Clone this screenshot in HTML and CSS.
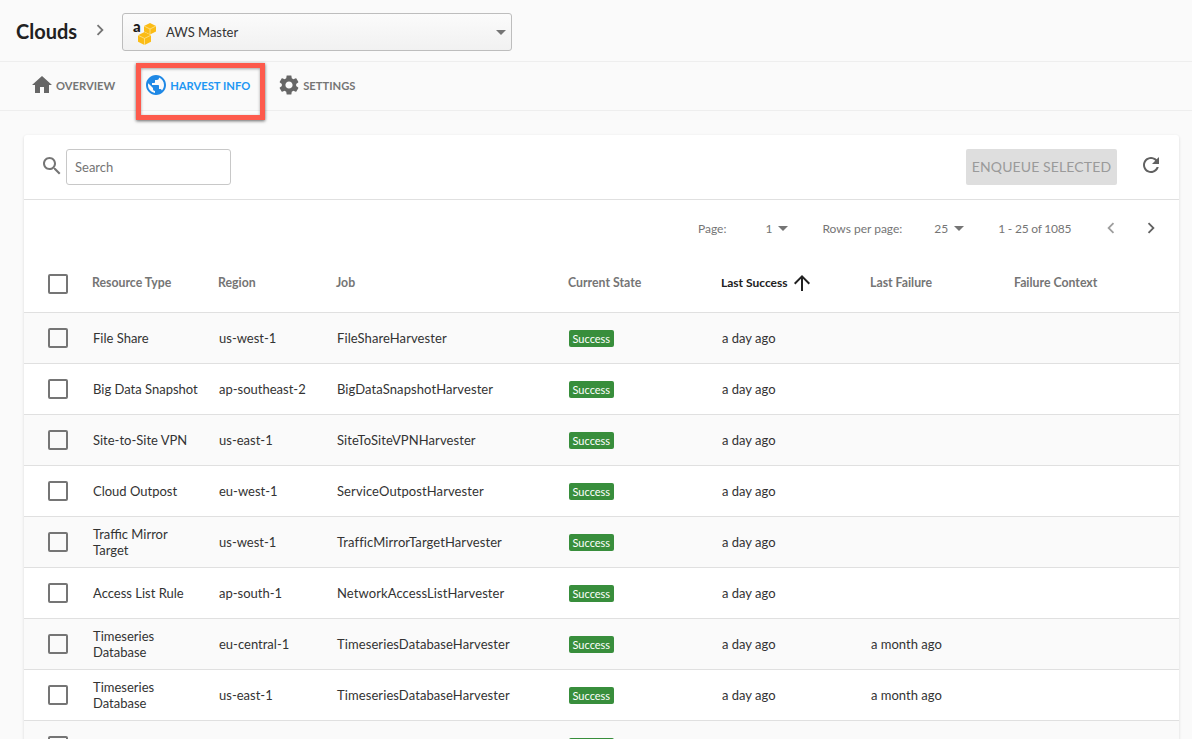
FILE: index.html
```html
<!DOCTYPE html>
<html lang="en">
<head>
<meta charset="utf-8">
<title>Clouds</title>
<link rel="stylesheet" href="styles.css">
</head>
<body>
<header class="topbar">
  <h1 class="title">Clouds</h1>
  <svg class="crumb" viewBox="0 0 24 24"><path d="M10 6L8.590 7.410 13.170 12l-4.580 4.590L10 18l6-6z"/></svg>
  <div class="select">
    <svg class="aws" viewBox="0 0 24 26">
      <path fill="#fbbc15" d="M18 4l6 3v5.500l-6 3-6-3V7z"/>
      <path fill="none" stroke="#fde9a8" stroke-width=".7" d="M12 7l6 3 6-3M18 10v5.500"/>
      <path fill="#fbbc15" d="M12.500 13l6.500 3.200v6.600L12.500 26 6 22.800v-6.600z"/>
      <path fill="none" stroke="#fde9a8" stroke-width=".7" d="M6 16.200l6.500 3.200 6.500-3.200M12.500 19.400V26"/>
    </svg>
    <span class="aws-a">a</span>
    <span class="select-label">AWS Master</span>
    <span class="caret select-caret"></span>
  </div>
</header>
<nav class="tabs">
  <a class="tab"><svg class="tab-icon" viewBox="0 0 24 24"><path d="M10 20v-6h4v6h5v-8h3L12 3 2 12h3v8z"/></svg>OVERVIEW</a>
  <a class="tab tab-active"><svg class="tab-icon" viewBox="0 0 24 24"><path d="M12 2C6.480 2 2 6.480 2 12s4.480 10 10 10 10-4.480 10-10S17.520 2 12 2zm-1 17.930c-3.950-.490-7-3.850-7-7.930 0-.620.080-1.210.210-1.790L9 15v1c0 1.100.900 2 2 2v1.930zm6.900-2.540c-.260-.810-1-1.390-1.900-1.390h-1v-3c0-.550-.450-1-1-1H8v-2h2c.550 0 1-.450 1-1V7h2c1.100 0 2-.900 2-2v-.410c2.930 1.190 5 4.060 5 7.410 0 2.080-.800 3.970-2.100 5.390z"/></svg>HARVEST INFO</a>
  <a class="tab"><svg class="tab-icon" viewBox="0 0 24 24"><path d="M19.140 12.940c.040-.300.060-.610.060-.940 0-.320-.020-.640-.070-.940l2.030-1.580c.180-.140.230-.410.120-.610l-1.920-3.320c-.120-.220-.370-.290-.590-.220l-2.390.960c-.500-.380-1.030-.700-1.620-.940l-.360-2.540c-.040-.240-.240-.410-.480-.410h-3.840c-.240 0-.430.170-.470.410l-.360 2.540c-.590.240-1.130.570-1.620.940l-2.390-.960c-.220-.080-.470 0-.590.220L2.740 8.870c-.120.210-.080.470.120.610l2.030 1.580c-.050.300-.090.630-.090.940s.020.640.070.940l-2.030 1.580c-.180.140-.230.410-.120.610l1.920 3.320c.120.220.370.290.590.220l2.390-.960c.500.380 1.030.700 1.620.940l.360 2.540c.050.240.240.410.480.410h3.840c.240 0 .440-.170.470-.410l.360-2.540c.590-.240 1.130-.560 1.620-.940l2.390.960c.220.080.470 0 .590-.220l1.920-3.320c.120-.220.070-.470-.120-.610l-2.010-1.580zM12 15.600c-1.980 0-3.600-1.620-3.600-3.600s1.620-3.600 3.600-3.600 3.600 1.620 3.600 3.600-1.620 3.600-3.600 3.600z"/></svg>SETTINGS</a>
  <div class="highlight"></div>
</nav>
<main class="content">
  <section class="card">
    <div class="toolbar">
      <svg class="search-icon" viewBox="0 0 24 24"><path d="M15.500 14h-.790l-.280-.270C15.410 12.590 16 11.110 16 9.500 16 5.910 13.090 3 9.500 3S3 5.910 3 9.500 5.910 16 9.500 16c1.610 0 3.090-.590 4.230-1.570l.270.280v.790l5 4.990L20.490 19l-4.990-5zm-6 0C7.010 14 5 11.990 5 9.500S7.010 5 9.500 5 14 7.010 14 9.500 11.990 14 9.500 14z"/></svg>
      <input class="search" type="text" placeholder="Search">
      <button class="enqueue" type="button" disabled>ENQUEUE SELECTED</button>
      <svg class="refresh" viewBox="0 0 24 24"><path d="M17.650 6.350C16.200 4.900 14.210 4 12 4c-4.420 0-7.990 3.580-7.990 8s3.570 8 7.990 8c3.730 0 6.840-2.550 7.730-6h-2.080c-.820 2.330-3.040 4-5.650 4-3.310 0-6-2.690-6-6s2.690-6 6-6c1.660 0 3.140.690 4.220 1.780L13 11h7V4l-2.350 2.350z"/></svg>
    </div>
    <div class="pager">
      <span class="pager-label">Page:</span>
      <span class="pager-value page-value">1<span class="caret"></span></span>
      <span class="pager-label rows-label">Rows per page:</span>
      <span class="pager-value rows-value">25<span class="caret"></span></span>
      <span class="pager-range">1 - 25 of 1085</span>
      <svg class="pager-nav prev" viewBox="0 0 24 24"><path d="M15.410 7.410L14 6l-6 6 6 6 1.410-1.410L10.830 12z"/></svg>
      <svg class="pager-nav next" viewBox="0 0 24 24"><path d="M10 6L8.590 7.410 13.170 12l-4.580 4.590L10 18l6-6z"/></svg>
    </div>
    <table class="grid">
      <colgroup>
        <col class="c-check"><col class="c-type"><col class="c-region"><col class="c-job"><col class="c-state"><col class="c-success"><col class="c-failure"><col class="c-context">
      </colgroup>
      <thead>
        <tr>
          <th><span class="box"></span></th>
          <th><span class="th-text">Resource Type</span></th><th><span class="th-text">Region</span></th><th><span class="th-text">Job</span></th><th><span class="th-text">Current State</span></th>
          <th class="sorted"><span class="sort-wrap th-text">Last Success<svg class="sort-arrow" viewBox="0 0 24 24"><path d="M4 12l1.410 1.410L11 7.830V20h2V7.830l5.580 5.590L20 12l-8-8-8 8z"/></svg></span></th>
          <th><span class="th-text">Last Failure</span></th><th><span class="th-text">Failure Context</span></th>
        </tr>
      </thead>
      <tbody>
        <tr><td><span class="box"></span></td><td>File Share</td><td>us-west-1</td><td class="job">FileShareHarvester</td><td><span class="badge">Success</span></td><td>a day ago</td><td></td><td></td></tr>
        <tr><td><span class="box"></span></td><td>Big Data Snapshot</td><td>ap-southeast-2</td><td class="job">BigDataSnapshotHarvester</td><td><span class="badge">Success</span></td><td>a day ago</td><td></td><td></td></tr>
        <tr><td><span class="box"></span></td><td>Site-to-Site VPN</td><td>us-east-1</td><td class="job">SiteToSiteVPNHarvester</td><td><span class="badge">Success</span></td><td>a day ago</td><td></td><td></td></tr>
        <tr><td><span class="box"></span></td><td>Cloud Outpost</td><td>eu-west-1</td><td class="job">ServiceOutpostHarvester</td><td><span class="badge">Success</span></td><td>a day ago</td><td></td><td></td></tr>
        <tr><td><span class="box"></span></td><td>Traffic Mirror Target</td><td>us-west-1</td><td class="job">TrafficMirrorTargetHarvester</td><td><span class="badge">Success</span></td><td>a day ago</td><td></td><td></td></tr>
        <tr><td><span class="box"></span></td><td>Access List Rule</td><td>ap-south-1</td><td class="job">NetworkAccessListHarvester</td><td><span class="badge">Success</span></td><td>a day ago</td><td></td><td></td></tr>
        <tr><td><span class="box"></span></td><td>Timeseries Database</td><td>eu-central-1</td><td class="job">TimeseriesDatabaseHarvester</td><td><span class="badge">Success</span></td><td>a day ago</td><td>a month ago</td><td></td></tr>
        <tr><td><span class="box"></span></td><td>Timeseries Database</td><td>us-east-1</td><td class="job">TimeseriesDatabaseHarvester</td><td><span class="badge">Success</span></td><td>a day ago</td><td>a month ago</td><td></td></tr>
        <tr><td><span class="box"></span></td><td></td><td></td><td></td><td><span class="badge">Success</span></td><td></td><td></td><td></td></tr>
      </tbody>
    </table>
  </section>
</main>
</body>
</html>
```
FILE: styles.css
```css
* { box-sizing: border-box; }
html, body { margin: 0; height: 739px; overflow: hidden; }
body { background: #fafafa; font-family: Lato, "Open Sans", sans-serif; color: #333; }

.topbar { height: 62px; display: flex; align-items: center; padding: 3px 0 0 16px; border-bottom: 1px solid #eeeeee; }
.title { margin: -2px 0 0; font-size: 20px; font-weight: 700; color: #212121; width: 76px; }
.crumb { width: 22px; height: 22px; fill: #757575; margin-left: -3px; margin-right: 11px; margin-top: -4px; flex: none; }
.select { position: relative; width: 390px; height: 38px; display: flex; align-items: center; border: 1px solid #bdbdbd; border-radius: 3px; background: linear-gradient(#fbfbfb, #f1f1f1); }
.aws { width: 24px; height: 26px; margin-left: 9px; flex: none; }
.aws-a { position: absolute; left: 10px; top: 5px; font-size: 15px; font-weight: 900; color: #1a1a1a; line-height: 14px; }
.select-label { margin-left: 10px; font-size: 13px; color: #333; }
.caret { display: inline-block; width: 0; height: 0; border-left: 5px solid transparent; border-right: 5px solid transparent; border-top: 5px solid #757575; }
.select-caret { position: absolute; right: 5px; top: 16px; }

.tabs { position: relative; height: 49px; display: flex; align-items: center; padding: 0 0 2px 30px; border-bottom: 1px solid #eeeeee; }
.tab { display: flex; align-items: center; font-size: 11.2px; font-weight: 700; color: #757575; }
.tab:nth-child(2) { margin-left: 29px; }
.tab:nth-child(3) { margin-left: 27px; }
.tab-icon { width: 24px; height: 24px; fill: #666; margin-right: 2px; flex: none; }
.tab-active { color: #2196f3; }
.tab-active .tab-icon { fill: #1e88e5; }
.highlight { position: absolute; left: 136px; top: 1px; width: 129px; height: 57px; border: 5px solid #fd5a4c; box-shadow: 0 1px 3px rgba(0,0,0,.6), inset 0 1px 3px rgba(0,0,0,.35); }

.content { padding: 24px 13px 0 24px; }
.card { background: #fff; border-radius: 3px; box-shadow: 0 1px 3px rgba(0,0,0,.14); }

.toolbar { height: 65px; display: flex; align-items: center; padding: 0 16px 1px 16px; border-bottom: 1px solid #e0e0e0; }
.search-icon { width: 24px; height: 24px; fill: #757575; flex: none; margin-top: -2px; }
.search { width: 165px; height: 36px; margin-left: 2px; padding: 0 8px; border: 1px solid #c8c8c8; border-radius: 3px; font: 13px Lato, sans-serif; background: #fff; }
.search::placeholder { color: #757575; opacity: 1; }
.enqueue { margin-left: auto; width: 151px; height: 36px; padding: 0; border: 0; border-radius: 2px; background: #dedede; color: #9a9a9a; font: 14px Lato, sans-serif; letter-spacing: .12px; }
.refresh { width: 24px; height: 24px; fill: #616161; margin-left: 22px; margin-top: -4px; flex: none; }

.pager { height: 58px; display: flex; align-items: center; font-size: 12px; color: #757575; padding-bottom: 1px; }
.pager-label:first-child { margin-left: 674px; }
.pager-value { display: inline-flex; align-items: center; gap: 6px; }
.pager-value .caret { margin-left: 0; }
.page-value { margin-left: 39px; }
.rows-label { margin-left: 34px; }
.rows-value { margin-left: 32px; }
.pager-range { margin-left: 34px; letter-spacing: -.22px; }
.pager-nav { width: 22px; height: 22px; flex: none; margin-top: -1px; }
.prev { margin-left: 29px; fill: #9e9e9e; }
.next { margin-left: 18px; fill: #616161; }

.grid { width: 100%; border-collapse: collapse; table-layout: fixed; font-size: 13px; }
.c-check { width: 69px; }
.c-type { width: 126px; }
.c-region { width: 118px; }
.c-job { width: 232px; }
.c-state { width: 153px; }
.c-success { width: 149px; }
.c-failure { width: 144px; }
.grid th { height: 54px; padding: 0 0 2px; text-align: left; font-size: 12.3px; font-weight: 700; color: #757575; border-bottom: 1px solid #e0e0e0; }
.grid th:first-child, .grid td:first-child { padding-left: 24px; }
.grid th + th { position: relative; left: -1px; }
.th-text { position: relative; top: -1px; }
.grid td { height: 51px; padding: 0; line-height: 16px; color: #333; border-bottom: 1px solid #e0e0e0; }
.grid td:nth-child(2) { padding-right: 15px; }
.grid td.job { letter-spacing: .09px; }
.grid tbody tr:nth-child(odd) { background: #fafafa; }
.grid th.sorted { color: #212121; font-size: 12px; }
.sort-wrap { display: inline-flex; align-items: center; }
.sort-arrow { width: 24px; height: 24px; fill: #212121; margin-left: 2px; }
.box { display: block; width: 20px; height: 20px; border: 2px solid #757575; border-radius: 2px; background: transparent; }
.badge { display: inline-block; height: 17px; padding: 0 3.5px; border-radius: 2px; background: #388e3c; color: #fff; font-size: 11px; line-height: 17px; vertical-align: middle; }
```
